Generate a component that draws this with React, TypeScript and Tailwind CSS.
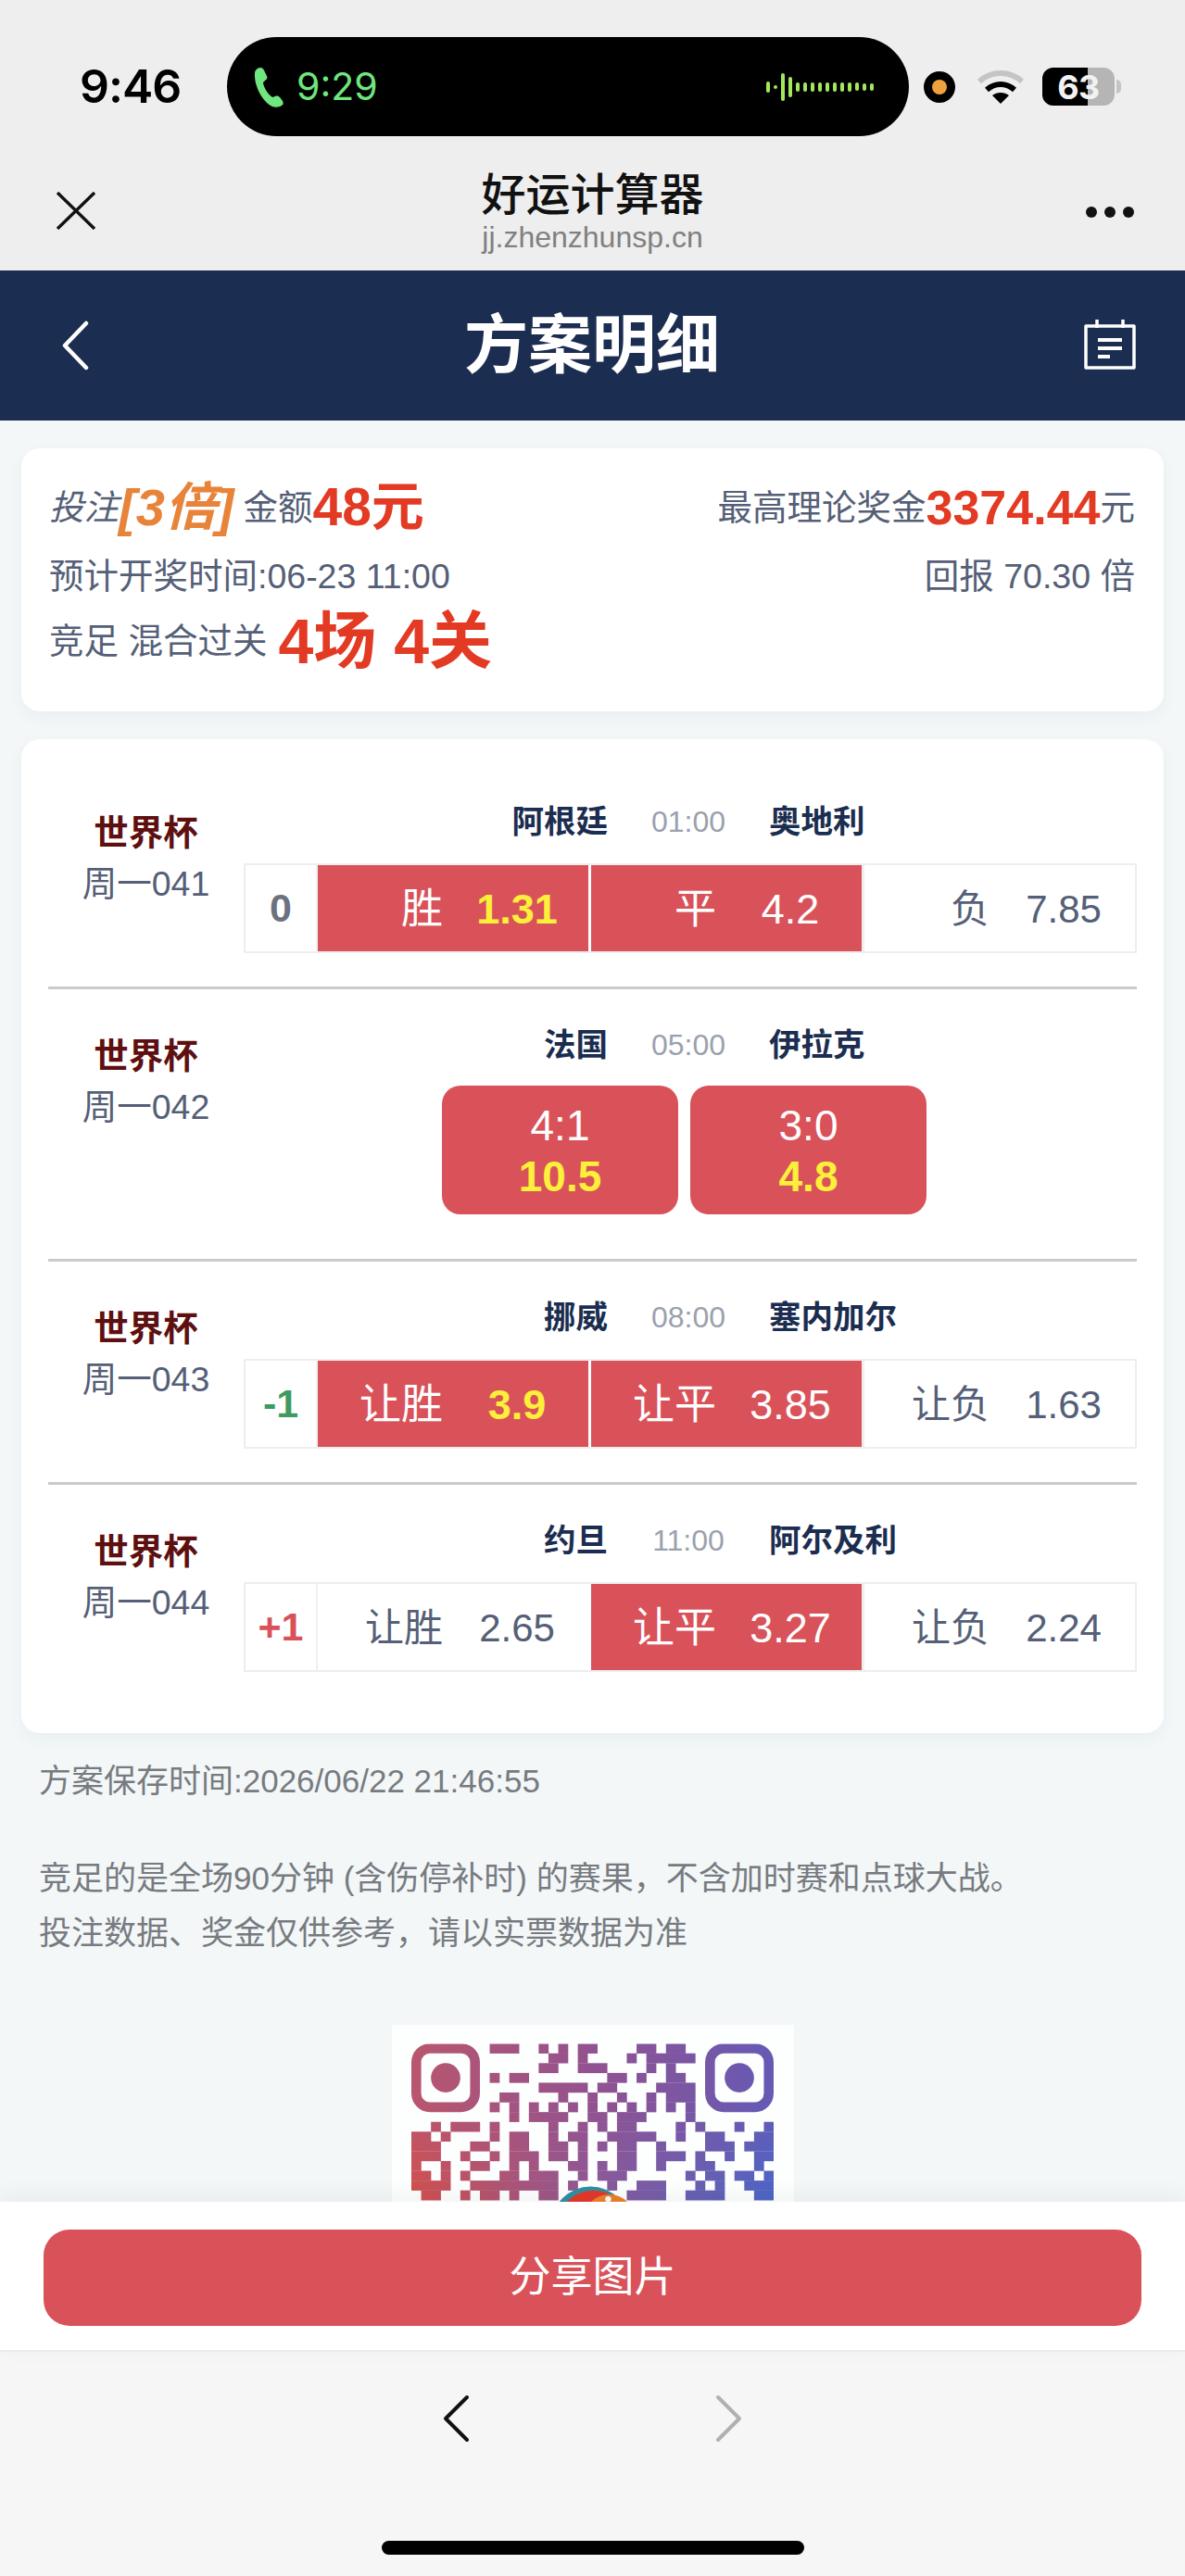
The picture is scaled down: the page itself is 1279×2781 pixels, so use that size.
const QR_ROWS = [
  "8-10 13 15 17-18 23-24 26-27",
  "14-15 17 22 24-28",
  "13-14 17-19 24 26",
  "8 10-11 20-21 23 26-27",
  "13-17 19-20 25-28",
  "9-10 15 18 21 24 26-28",
  "8 10 12 14 16 18 20 22 24 26 28",
  "10 12-15 18-19 21-23 28",
  "2 4-6 8 14 17 19 21-22 27 29 33 36",
  "0-1 3 8 10-11 14 16-17 20-24 27 30-31 35-36",
  "0-2 6-7 10-11 14-15 17 19 21-22 25 30-32 34-36",
  "0-2 5 8 10-12 14-15 17 21-22 25-27 29 32 35-36",
  "0 3 6-7 10 12 16-17 19 21-22 25 29-30 35",
  "0-1 3 5 9-10 12-14 17 19-21 28 30-31 33-34 36",
  "0-3 6-14 16 20 23-25 29 31 34-36",
  "1-2 5 7-8 10 13-14 22-25 28-31 35-36",
];

interface Pick {
  label: string;
  odds: string;
  on?: boolean;
  hot?: boolean;
}

interface Match {
  no: string;
  home: string;
  time: string;
  away: string;
  handicap?: string;
  handicapColor?: string;
  picks?: Pick[];
}

const MATCHES: Match[] = [
  {
    no: "周一041",
    home: "阿根廷",
    time: "01:00",
    away: "奥地利",
    handicap: "0",
    handicapColor: "text-[#6b7280]",
    picks: [
      { label: "胜", odds: "1.31", on: true, hot: true },
      { label: "平", odds: "4.2", on: true },
      { label: "负", odds: "7.85" },
    ],
  },
  { no: "周一042", home: "法国", time: "05:00", away: "伊拉克" },
  {
    no: "周一043",
    home: "挪威",
    time: "08:00",
    away: "塞内加尔",
    handicap: "-1",
    handicapColor: "text-[#3f9a5f]",
    picks: [
      { label: "让胜", odds: "3.9", on: true, hot: true },
      { label: "让平", odds: "3.85", on: true },
      { label: "让负", odds: "1.63" },
    ],
  },
  {
    no: "周一044",
    home: "约旦",
    time: "11:00",
    away: "阿尔及利",
    handicap: "+1",
    handicapColor: "text-[#d9525a]",
    picks: [
      { label: "让胜", odds: "2.65" },
      { label: "让平", odds: "3.27", on: true },
      { label: "让负", odds: "2.24" },
    ],
  },
];

function QrCode() {
  const cells: { x: number; y: number; w: number }[] = [];
  QR_ROWS.forEach((row, y) => {
    row.split(" ").forEach((part) => {
      const [a, b] = part.split("-").map(Number);
      cells.push({ x: a, y, w: (b ?? a) - a + 1 });
    });
  });
  const finders = [3.5, 33.5];
  return (
    <svg viewBox="0 0 37 17" className="block w-[391px] h-[180px]">
      <defs>
        <linearGradient id="qr-bottom" x1="0" y1="0" x2="1" y2="0">
          <stop offset="0" stopColor="#d4504c" />
          <stop offset="0.5" stopColor="#8d5a9a" />
          <stop offset="1" stopColor="#4b67c8" />
        </linearGradient>
        <linearGradient id="qr-top" x1="0" y1="0" x2="1" y2="0">
          <stop offset="0" stopColor="#b9566e" />
          <stop offset="0.5" stopColor="#925290" />
          <stop offset="1" stopColor="#655ab5" />
        </linearGradient>
        <linearGradient id="qr-fade" x1="0" y1="0" x2="0" y2="1">
          <stop offset="0.35" stopColor="#fff" />
          <stop offset="0.95" stopColor="#000" />
        </linearGradient>
        <mask id="qr-fade-mask" maskUnits="userSpaceOnUse" x="0" y="0" width="37" height="17">
          <rect width="37" height="17" fill="url(#qr-fade)" />
        </mask>
        <mask id="qr-shape" maskUnits="userSpaceOnUse" x="0" y="0" width="37" height="17">
          {cells.map((c, i) => (
            <rect key={i} x={c.x} y={c.y} width={c.w + 0.02} height="1.02" fill="#fff" />
          ))}
          {finders.map((cx) => (
            <g key={cx}>
              <rect
                x={cx - 3}
                y="0.5"
                width="6"
                height="6"
                rx="1.4"
                fill="none"
                stroke="#fff"
                strokeWidth="1"
              />
              <circle cx={cx} cy="3.5" r="1.5" fill="#fff" />
            </g>
          ))}
        </mask>
      </defs>
      <g mask="url(#qr-shape)">
        <rect width="37" height="17" fill="url(#qr-bottom)" />
        <rect width="37" height="17" fill="url(#qr-top)" mask="url(#qr-fade-mask)" />
      </g>
      <circle cx="18.3" cy="18.6" r="4" fill="#2f8fa0" />
      <circle cx="18.6" cy="18.8" r="3.8" fill="#e2392c" />
      <circle cx="20.2" cy="18" r="2.6" fill="#ef7f2c" />
      <circle cx="20.1" cy="15.9" r="0.3" fill="#fff" />
    </svg>
  );
}

function StatusBar() {
  return (
    <div className="h-[165px] pt-[40px] pl-[86px] flex items-start">
      <div className="w-[159px] h-[107px] flex items-center text-[50px] font-semibold text-black font-['Inter',sans-serif] tracking-[-1px]">
        9:46
      </div>
      <div className="w-[736px] h-[107px] rounded-[54px] bg-black flex items-center pl-[28px] pr-[38px]">
        <svg viewBox="0 0 34 44" className="w-[34px] h-[44px]" fill="#6fe67f">
          <path d="M2 7C2 4 5 1 8 1C10 1 11 2 12 4L15 10C16 12 15 14 13 15L11 17C11 21 16 30 21 33L24 32C26 31 28 32 29 33L32 37C33 39 33 41 31 42C28 44 24 44 21 43C10 38 1 20 2 7Z" />
        </svg>
        <span className="ml-[13px] text-[41px] leading-none text-[#6fe67f] font-['Inter',sans-serif]">9:29</span>
        <div className="ml-auto flex items-center gap-[3.5px]">
          {[12, 4, 30, 22, 10, 10, 10, 10, 10, 10, 10, 10, 9, 8, 8].map((h, i) => (
            <span
              key={i}
              className="block w-[4.5px] rounded-full bg-[#a3e85a]"
              style={{ height: h }}
            />
          ))}
        </div>
      </div>
      <div className="ml-[16px] mt-[37px] w-[34px] h-[34px] rounded-full bg-black flex items-center justify-center">
        <span className="block w-[16px] h-[16px] rounded-full bg-[#f0a03c]" />
      </div>
      <svg viewBox="0 0 52 38" className="ml-[23px] mt-[35px] w-[52px] h-[38px]" fill="none">
        <path d="M3 13C16 1 36 1 49 13" stroke="#c4c4c4" strokeWidth="6" />
        <path d="M11 22C20 14 32 14 41 22" stroke="#000" strokeWidth="6" />
        <path d="M26 37L17 28C22 24 30 24 35 28Z" fill="#000" />
      </svg>
      <div className="ml-[19px] mt-[33px] relative w-[78px] h-[41px] rounded-[12px] overflow-hidden bg-[#b5b5b5] flex items-center justify-center">
        <span className="absolute left-0 top-0 bottom-0 w-[49px] bg-black" />
        <span className="relative text-[36px] leading-none font-bold text-[#f2f2f2] font-['Inter',sans-serif] -tracking-[0.5px]">63</span>
      </div>
      <span className="ml-[2px] mt-[46px] w-[5px] h-[15px] rounded-r-full bg-[#c4c4c4]" />
    </div>
  );
}

function WechatBar() {
  return (
    <div className="h-[127px] flex items-start px-[55px]">
      <div className="w-[200px] pt-[42px]">
        <svg viewBox="0 0 44 41" className="w-[44px] h-[41px] ml-[5px]" stroke="#111" strokeWidth="3.4" fill="none">
          <path d="M2 1L42 40M42 1L2 40" />
        </svg>
      </div>
      <div className="flex-1 flex flex-col items-center pt-[22px]">
        <div className="text-[48px] leading-[48px] text-[#111] font-medium">好运计算器</div>
        <div className="mt-[5px] text-[32px] leading-[32px] text-[#808080]">jj.zhenzhunsp.cn</div>
      </div>
      <div className="w-[200px] pt-[58px] flex justify-end gap-[8px]">
        <span className="block w-[12px] h-[12px] rounded-full bg-[#111]" />
        <span className="block w-[12px] h-[12px] rounded-full bg-[#111]" />
        <span className="block w-[12px] h-[12px] rounded-full bg-[#111]" />
      </div>
    </div>
  );
}

function NavBar() {
  return (
    <div className="h-[162px] bg-[#1b2d50] flex items-center justify-between pl-[64px] pr-[53px]">
      <svg viewBox="0 0 32 54" className="w-[32px] h-[54px] mr-[12px]" fill="none" stroke="#fff" strokeWidth="4.5" strokeLinecap="round" strokeLinejoin="round">
        <path d="M29 3L6 27L29 51" />
      </svg>
      <div className="text-[69px] leading-none font-bold text-white">方案明细</div>
      <svg viewBox="0 0 56 54" className="w-[56px] h-[54px] -mt-[2px]" fill="none" stroke="#fff" strokeWidth="3.5">
        <path d="M2 7H54V52H2Z" strokeLinejoin="round" />
        <path d="M14 0V9M42 0V9" />
        <path d="M15 22H41M15 31H41M15 40H28" strokeWidth="4" />
      </svg>
    </div>
  );
}

function SummaryCard() {
  return (
    <div className="mx-[23px] mt-[30px] h-[284px] rounded-[20px] bg-white shadow-[0_6px_16px_rgba(60,80,100,0.05)] pl-[30px] pr-[31px] pt-[27px] text-[37.5px] text-[#555f77]">
      <div className="flex justify-between items-center h-[74px]">
        <div className="flex items-center">
          <span className="italic">投注</span>
          <span className="italic font-bold text-[56px] text-[#e8833a] mr-[10px]">[3倍]</span>
          <span>金额</span>
          <span className="font-bold text-[57px] text-[#e33a24]">48元</span>
        </div>
        <div className="flex items-center">
          <span>最高理论奖金</span>
          <span className="font-bold text-[52px] text-[#e33a24]">3374.44</span>
          <span>元</span>
        </div>
      </div>
      <div className="flex justify-between items-center h-[62px] mt-[6px]">
        <span>预计开奖时间:06-23 11:00</span>
        <span>回报 70.30 倍</span>
      </div>
      <div className="flex items-center h-[76px] mt-[1px]">
        <span>竞足 混合过关</span>
        <span className="ml-[12px] font-bold text-[68px] text-[#e33a24] whitespace-pre">4场 4关</span>
      </div>
    </div>
  );
}

function PickTable({ match }: { match: Match }) {
  return (
    <div className="flex h-[97px] border-2 border-[#eeeeee] bg-white">
      <div className={`w-[78px] shrink-0 border-r-2 border-[#f0f0f0] flex items-center justify-center text-[43px] font-bold ${match.handicapColor}`}>
        {match.handicap}
      </div>
      {match.picks?.map((p, i) => (
        <div
          key={p.label}
          className={`flex-1 flex items-center justify-end pt-[2px] ${
            i > 0 ? "border-l-[3px]" : ""
          } ${p.on ? "bg-[#d9525a] text-white border-white text-[45px]" : "text-[#555f77] border-[#f0f0f0] text-[42px]"}`}
        >
          <span className="mr-[21px]">{p.label}</span>
          <span className={`w-[118px] mr-[18px] text-center ${p.hot ? "font-bold text-[#fdf03a]" : ""}`}>
            {p.odds}
          </span>
        </div>
      ))}
    </div>
  );
}

function ScoreButton({ score, odds }: { score: string; odds: string }) {
  return (
    <div className="w-[255px] h-[139px] rounded-[20px] bg-[#d9525a] flex flex-col items-center justify-center pt-[2px] text-[46px] leading-[55px]">
      <span className="text-white">{score}</span>
      <span className="font-bold text-[#fdf03a]">{odds}</span>
    </div>
  );
}

export default function App() {
  return (
    <div className="w-[1279px] h-[2781px] flex flex-col overflow-hidden bg-[#f3f7f8] font-['Liberation_Sans','Noto_Sans_CJK_SC',sans-serif]">
      <header className="bg-[#eeeeee]">
        <StatusBar />
        <WechatBar />
      </header>
      <NavBar />

      <main className="flex-1 min-h-0 overflow-hidden">
        <SummaryCard />

        <div className="mx-[23px] mt-[30px] h-[1073px] rounded-[20px] bg-white shadow-[0_6px_16px_rgba(60,80,100,0.05)] px-[29px] pt-[29px]">
          {MATCHES.map((m, i) => (
            <div key={m.no} className={`flex ${i > 0 ? "border-t-[3px] border-[#c9cacb]" : ""}`}>
              <div className="w-[211px] shrink-0 pt-[52px] text-center">
                <div className="h-[40px] leading-[40px] text-[37.5px] font-bold text-[#5e1010]">世界杯</div>
                <div className="mt-[13px] h-[44px] leading-[44px] text-[37.5px] text-[#555f77]">{m.no}</div>
              </div>
              <div className={`flex-1 pt-[40px] ${i === 2 ? "pb-[36px]" : i === 0 ? "pb-[36px]" : ""} ${i === 1 ? "pb-[48px]" : ""}`}>
                <div className="flex h-[40px] items-center text-[34.5px] leading-[40px]">
                  <span className="w-[393px] text-right font-bold text-[#1b2d50]">{m.home}</span>
                  <span className="w-[174px] text-center text-[32px] text-[#9aa1ad]">{m.time}</span>
                  <span className="font-bold text-[#1b2d50]">{m.away}</span>
                </div>
                {m.picks ? (
                  <div className="mt-[25px]">
                    <PickTable match={m} />
                  </div>
                ) : (
                  <div className="mt-[24px] pl-[214px] flex gap-[13px]">
                    <ScoreButton score="4:1" odds="10.5" />
                    <ScoreButton score="3:0" odds="4.8" />
                  </div>
                )}
              </div>
            </div>
          ))}
        </div>

        <div className="px-[42px] text-[#777b80] text-[35px]">
          <p className="mt-[29px] h-[46px] leading-[46px]">方案保存时间:2026/06/22 21:46:55</p>
          <p className="mt-[59px] h-[46px] leading-[46px]">竞足的是全场90分钟 (含伤停补时) 的赛果，不含加时赛和点球大战。</p>
          <p className="mt-[13px] h-[46px] leading-[46px]">投注数据、奖金仅供参考，请以实票数据为准</p>
        </div>

        <div className="mx-auto mt-[76px] w-[434px] h-[434px] bg-[#fdfefe] pl-[21px] pt-[20px]">
          <QrCode />
        </div>
      </main>

      <div className="relative h-[162px] bg-white border-b-2 border-[#ececec] px-[47px] pt-[30px] shadow-[0_-6px_24px_rgba(0,0,0,0.05)]">
        <div className="h-[104px] rounded-[28px] bg-[#d9525a] flex items-center justify-center text-[45px] text-white">
          分享图片
        </div>
      </div>

      <footer className="h-[242px] bg-[#f6f6f6] flex flex-col items-center">
        <div className="mt-[46px] flex gap-[265px]">
          <svg viewBox="0 0 30 52" className="w-[30px] h-[52px]" fill="none" stroke="#111" strokeWidth="4" strokeLinecap="round" strokeLinejoin="round">
            <path d="M27 3L4 26L27 49" />
          </svg>
          <svg viewBox="0 0 30 52" className="w-[30px] h-[52px]" fill="none" stroke="#b0b0b0" strokeWidth="4" strokeLinecap="round" strokeLinejoin="round">
            <path d="M3 3L26 26L3 49" />
          </svg>
        </div>
        <div className="mt-[106px] w-[456px] h-[15px] rounded-full bg-black" />
      </footer>
    </div>
  );
}
